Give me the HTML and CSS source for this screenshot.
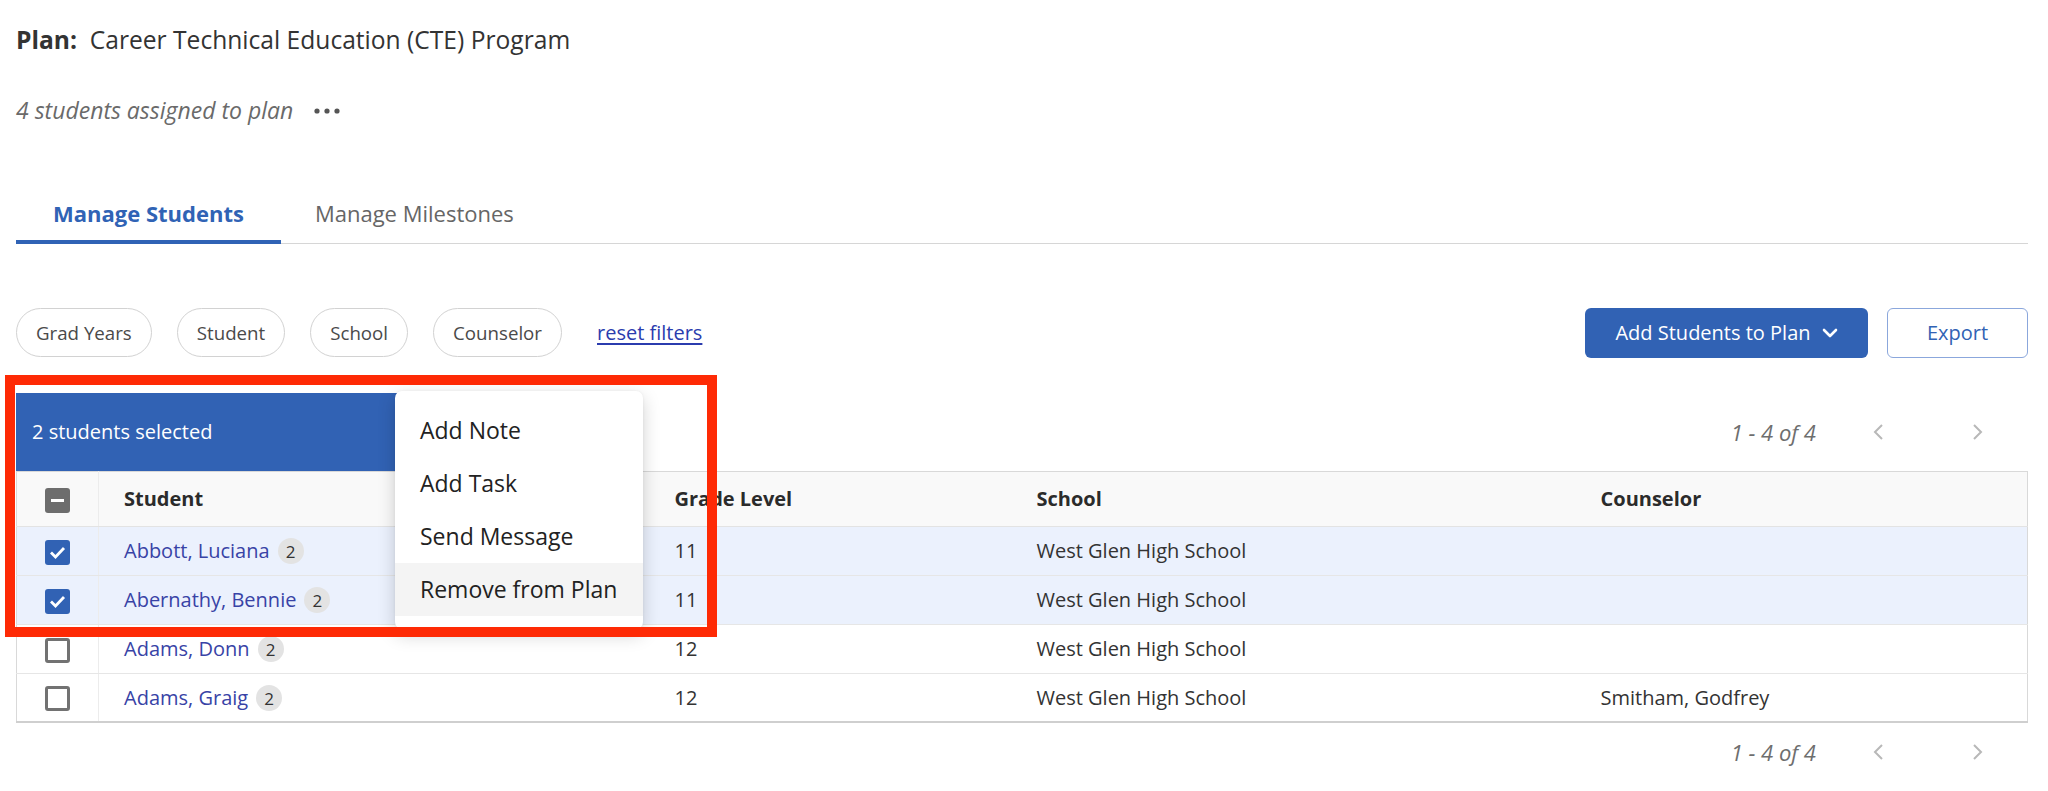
FILE: index.html
```html
<!DOCTYPE html>
<html lang="en">
<head>
<meta charset="utf-8">
<title>Plan: Career Technical Education (CTE) Program</title>
<link rel="stylesheet" href="styles.css">
</head>
<body>
<div class="page">
  <header class="plan-head">
    <h1 class="plan-title"><span class="plan-label">Plan:</span>&nbsp; Career Technical Education (CTE) Program</h1>
    <div class="plan-sub">
      <span class="plan-count">4 students assigned to plan</span>
      <svg class="more" width="26" height="6" viewBox="0 0 26 6"><circle cx="3" cy="3" r="2.6"/><circle cx="13" cy="3" r="2.6"/><circle cx="23" cy="3" r="2.6"/></svg>
    </div>
  </header>

  <nav class="tabs">
    <a class="tab active">Manage Students</a>
    <a class="tab">Manage Milestones</a>
  </nav>

  <div class="toolbar">
    <div class="filters">
      <button class="chip">Grad Years</button>
      <button class="chip">Student</button>
      <button class="chip">School</button>
      <button class="chip">Counselor</button>
      <a class="reset">reset filters</a>
    </div>
    <div class="actions">
      <button class="btn-primary">Add Students to Plan
        <svg width="16" height="10" viewBox="0 0 16 10"><polyline points="2,2 8,8 14,2" fill="none" stroke="#fff" stroke-width="2.6" stroke-linecap="round" stroke-linejoin="round"/></svg>
      </button>
      <button class="btn-outline">Export</button>
    </div>
  </div>

  <div class="list-bar">
    <div class="sel-bar">2 students selected</div>
    <div class="pager">
      <span class="pager-range">1 - 4 of 4</span>
      <span class="pager-btn"><svg width="12" height="20" viewBox="0 0 12 20"><polyline points="10,3 3,10 10,17" fill="none" stroke="#b8b8b8" stroke-width="2"/></svg></span>
      <span class="pager-btn"><svg width="12" height="20" viewBox="0 0 12 20"><polyline points="2,3 9,10 2,17" fill="none" stroke="#b8b8b8" stroke-width="2"/></svg></span>
    </div>
  </div>

  <table class="grid">
    <colgroup>
      <col class="c-check"><col class="c-student"><col class="c-grade"><col class="c-school"><col>
    </colgroup>
    <thead>
      <tr>
        <th class="cell-check"><span class="cb cb-ind"><span class="dash"></span></span></th>
        <th>Student</th>
        <th>Grade Level</th>
        <th>School</th>
        <th>Counselor</th>
      </tr>
    </thead>
    <tbody>
      <tr class="selected">
        <td class="cell-check"><span class="cb cb-on"><svg width="17" height="13" viewBox="0 0 17 13"><polyline points="2,6.5 6.5,11 15,2" fill="none" stroke="#fff" stroke-width="2.8"/></svg></span></td>
        <td><a class="name">Abbott, Luciana</a><span class="badge">2</span></td>
        <td>11</td>
        <td>West Glen High School</td>
        <td></td>
      </tr>
      <tr class="selected">
        <td class="cell-check"><span class="cb cb-on"><svg width="17" height="13" viewBox="0 0 17 13"><polyline points="2,6.5 6.5,11 15,2" fill="none" stroke="#fff" stroke-width="2.8"/></svg></span></td>
        <td><a class="name">Abernathy, Bennie</a><span class="badge">2</span></td>
        <td>11</td>
        <td>West Glen High School</td>
        <td></td>
      </tr>
      <tr>
        <td class="cell-check"><span class="cb"></span></td>
        <td><a class="name">Adams, Donn</a><span class="badge">2</span></td>
        <td>12</td>
        <td>West Glen High School</td>
        <td></td>
      </tr>
      <tr>
        <td class="cell-check"><span class="cb"></span></td>
        <td><a class="name">Adams, Graig</a><span class="badge">2</span></td>
        <td>12</td>
        <td>West Glen High School</td>
        <td>Smitham, Godfrey</td>
      </tr>
    </tbody>
  </table>

  <div class="pager pager-bottom">
    <span class="pager-range">1 - 4 of 4</span>
    <span class="pager-btn"><svg width="12" height="20" viewBox="0 0 12 20"><polyline points="10,3 3,10 10,17" fill="none" stroke="#b8b8b8" stroke-width="2"/></svg></span>
    <span class="pager-btn"><svg width="12" height="20" viewBox="0 0 12 20"><polyline points="2,3 9,10 2,17" fill="none" stroke="#b8b8b8" stroke-width="2"/></svg></span>
  </div>

  <ul class="menu">
    <li>Add Note</li>
    <li>Add Task</li>
    <li>Send Message</li>
    <li class="hover">Remove from Plan</li>
  </ul>

  <div class="annotation"></div>
</div>
</body>
</html>
```

FILE: styles.css
```css
* { box-sizing: border-box; }

html, body {
  margin: 0;
  padding: 0;
  background: #fff;
}

body {
  font-family: "Open Sans", "Liberation Sans", sans-serif;
  color: #333;
}

.page {
  position: relative;
  width: 2048px;
  padding: 24px 20px 0 16px;
}

/* Header */
.plan-title {
  margin: 0;
  font-size: 24.6px;
  line-height: 32px;
  font-weight: 400;
  color: #333;
}
.plan-label { font-weight: 700; }

.plan-sub {
  margin-top: 39px;
  height: 30px;
  display: flex;
  align-items: center;
  gap: 21px;
}
.plan-count {
  font-size: 23px;
  line-height: 30px;
  font-style: italic;
  color: #6a6a6a;
}
.more { fill: #555; margin-top: 2px; }

/* Tabs */
.tabs {
  margin-top: 63px;
  display: flex;
  border-bottom: 1.5px solid #d6d6d6;
}
.tab {
  padding: 10px 37px 12px;
  font-size: 22px;
  line-height: 30px;
  color: #666;
  border-bottom: 4px solid transparent;
  margin-bottom: -1.5px;
}
.tab.active {
  color: #3063b5;
  font-weight: 700;
  border-bottom-color: #3063b5;
}
.tab + .tab { padding-left: 34px; }

/* Toolbar */
.toolbar {
  margin-top: 64px;
  display: flex;
  justify-content: space-between;
  align-items: center;
}
.filters {
  display: flex;
  align-items: center;
  gap: 25px;
}
.chip {
  height: 49px;
  padding: 0 19px;
  border: 1.5px solid #d2d2d2;
  border-radius: 25px;
  background: #fff;
  font-family: inherit;
  font-size: 18.7px;
  color: #4a4a4a;
}
.reset {
  margin-left: 10px;
  font-size: 20px;
  color: #2b3cae;
  text-decoration: underline;
  text-underline-offset: 3px;
}
.actions {
  display: flex;
  gap: 19px;
}
.btn-primary {
  height: 50px;
  width: 283px;
  border: none;
  border-radius: 6px;
  background: #3162b4;
  color: #fff;
  font-family: inherit;
  font-size: 20px;
  display: flex;
  align-items: center;
  justify-content: center;
  gap: 11px;
}
.btn-outline {
  height: 50px;
  width: 141px;
  border: 1.5px solid #8ba7dc;
  border-radius: 6px;
  background: #fff;
  color: #3162b4;
  font-family: inherit;
  font-size: 20px;
}

/* Selection + pager row */
.list-bar {
  margin-top: 35px;
  height: 78px;
  display: flex;
  justify-content: space-between;
  align-items: center;
}
.sel-bar {
  height: 78px;
  width: 480px;
  background: #3162b4;
  color: #fff;
  font-size: 20px;
  display: flex;
  align-items: center;
  padding-left: 16px;
}
.pager {
  display: flex;
  align-items: center;
  height: 58px;
}
.pager-range {
  font-size: 22px;
  font-style: italic;
  color: #6e6e6e;
  margin-right: 12px;
}
.pager-btn {
  width: 100px;
  display: flex;
  justify-content: center;
  align-items: center;
}
.pager-bottom { justify-content: flex-end; }

/* Table */
.grid {
  width: 2012px;
  border-collapse: collapse;
  table-layout: fixed;
  border: 1.5px solid #d9d9d9;
  border-bottom: 2px solid #cfcfcf;
  font-size: 20px;
}
.c-check { width: 82px; }
.c-student { width: 551px; }
.c-grade { width: 362px; }
.c-school { width: 564px; }

.grid th {
  height: 55px;
  background: #f9f9f9;
  text-align: left;
  font-weight: 700;
  color: #2b2b2b;
  padding: 0 26px 0 25px;
  border-bottom: 1.5px solid #e3e3e3;
}
.grid td {
  height: 49px;
  padding: 0 26px 0 25px;
  color: #333;
  border-bottom: 1.5px solid #e6e6e6;
}
.grid tr:last-child td { border-bottom: none; }
.grid .cell-check {
  padding: 0;
  text-align: center;
  border-right: 1.5px solid #ececec;
}
.grid tr.selected td { background: #ebf1fd; }

.cb {
  display: inline-flex;
  width: 25px;
  height: 25px;
  border: 3px solid #727272;
  border-radius: 3px;
  vertical-align: middle;
  align-items: center;
  justify-content: center;
  background: #fff;
}
.cb-on {
  border: none;
  background: #3162b4;
}
.cb-ind {
  border: none;
  background: #6d6d6d;
}
.dash {
  width: 13px;
  height: 3px;
  background: #fff;
}

.name {
  color: #3843a6;
}
.badge {
  display: inline-flex;
  width: 26px;
  height: 26px;
  border-radius: 50%;
  background: #e3e3e3;
  color: #333;
  font-size: 17px;
  align-items: center;
  justify-content: center;
  margin-left: 8px;
  vertical-align: 0;
}

/* Dropdown menu (overlay) */
.menu {
  position: absolute;
  left: 395px;
  top: 391px;
  width: 248px;
  margin: 0;
  padding: 13px 0;
  list-style: none;
  background: #fff;
  border-radius: 7px;
  box-shadow: 0 6px 18px rgba(0, 0, 0, 0.18), 0 0 3px rgba(0, 0, 0, 0.06);
}
.menu li {
  height: 53px;
  line-height: 53px;
  padding-left: 25px;
  font-size: 23px;
  color: #222;
}
.menu li.hover { background: #f4f4f4; }

/* Red annotation rectangle (overlay) */
.annotation {
  position: absolute;
  left: 5px;
  top: 375px;
  width: 712px;
  height: 262px;
  border: 10px solid #fe2a05;
  pointer-events: none;
}
```
